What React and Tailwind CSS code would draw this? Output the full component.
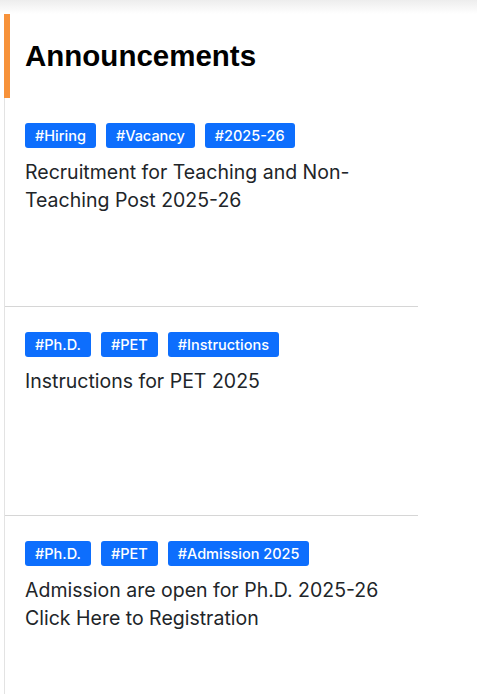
const items = [
  {
    tags: ['#Hiring', '#Vacancy', '#2025-26'],
    text: 'Recruitment for Teaching and Non-Teaching Post 2025-26',
  },
  {
    tags: ['#Ph.D.', '#PET', '#Instructions'],
    text: 'Instructions for PET 2025',
  },
  {
    tags: ['#Ph.D.', '#PET', '#Admission 2025'],
    text: 'Admission are open for Ph.D. 2025-26 Click Here to Registration',
  },
];

export default function App() {
  return (
    <div className="min-h-[694px] bg-white">
      <div className="h-[14px] bg-gradient-to-b from-[#ededed] to-white" />
      <div className="ml-[4px] w-[414px] border-l border-[#e3e3e3] min-h-[680px]">
        <div className="-ml-px flex h-[84px] items-center border-l-[6px] border-[#f7923a] pl-[15px]">
          <h2 className="text-[29.5px] font-bold leading-none text-black" style={{ fontFamily: '"Liberation Sans", Arial, sans-serif' }}>
            Announcements
          </h2>
        </div>
        {items.map((item, i) => (
          <div
            key={i}
            className={`h-[209px] pl-[20px] pr-4 pt-[25px] ${i < items.length - 1 ? 'border-b border-[#d6d6d6]' : ''}`}
            style={{ fontFamily: 'Inter, "Noto Sans", sans-serif' }}
          >
            <div className="flex gap-[10px]">
              {item.tags.map((t) => (
                <span
                  key={t}
                  className="flex h-[25px] items-center rounded-[3px] bg-[#0d6efd] px-[10px] text-[14.5px] font-medium text-white"
                >
                  {t}
                </span>
              ))}
            </div>
            <p className="mt-[10px] pr-4 text-[19.5px] leading-[28px] text-[#212529]">{item.text}</p>
          </div>
        ))}
      </div>
    </div>
  );
}
